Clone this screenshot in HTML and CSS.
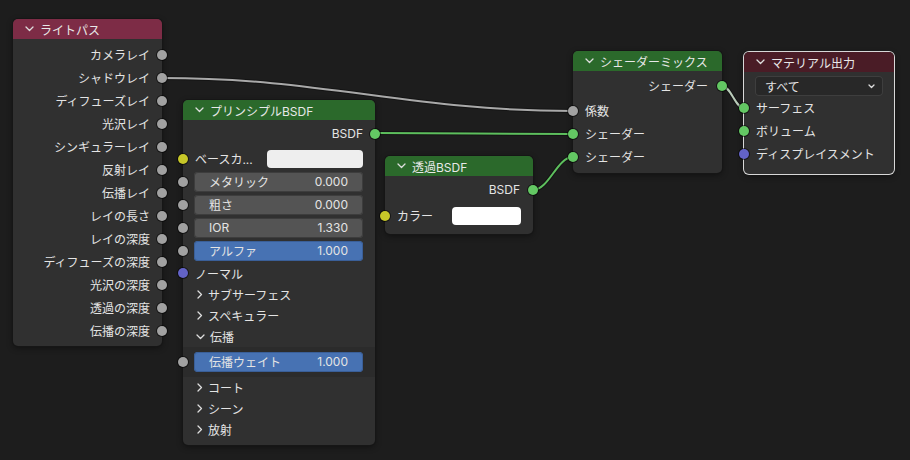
FILE: index.html
```html
<!DOCTYPE html>
<html lang="ja">
<head>
  <meta charset="UTF-8">
  <title>シェーダーエディター</title>
  <link rel="stylesheet" href="styles.css">
</head>
<body>
  <div class="canvas">
    <svg class="links" width="910" height="460" viewBox="0 0 910 460">
      <g class="link-shadow">
        <path d="M162 78 C326 78 409 111 573 111"/>
        <path d="M376 133 C455 133 494 134 573 134"/>
        <path d="M533 190 C549 190 557 157 573 157"/>
        <path d="M722 86 C731 86 735 108 744 108"/>
      </g>
      <path class="link gray" d="M162 78 C326 78 409 111 573 111"/>
      <path class="link green" d="M376 133 C455 133 494 134 573 134"/>
      <path class="link green" d="M533 190 C549 190 557 157 573 157"/>
      <path class="link pale" d="M722 86 C731 86 735 108 744 108"/>
    </svg>

    <!-- ライトパス -->
    <div class="node node-lightpath">
      <div class="node-header head-input">
        <svg class="chev" width="9" height="6" viewBox="0 0 9 6"><polyline points="1,1 4.5,4.5 8,1"/></svg>
        <span>ライトパス</span>
      </div>
      <div class="node-body">
        <div class="row out">カメラレイ<i class="socket gray"></i></div>
        <div class="row out">シャドウレイ<i class="socket gray"></i></div>
        <div class="row out">ディフューズレイ<i class="socket gray"></i></div>
        <div class="row out">光沢レイ<i class="socket gray"></i></div>
        <div class="row out">シンギュラーレイ<i class="socket gray"></i></div>
        <div class="row out">反射レイ<i class="socket gray"></i></div>
        <div class="row out">伝播レイ<i class="socket gray"></i></div>
        <div class="row out">レイの長さ<i class="socket gray"></i></div>
        <div class="row out">レイの深度<i class="socket gray"></i></div>
        <div class="row out">ディフューズの深度<i class="socket gray"></i></div>
        <div class="row out">光沢の深度<i class="socket gray"></i></div>
        <div class="row out">透過の深度<i class="socket gray"></i></div>
        <div class="row out">伝播の深度<i class="socket gray"></i></div>
      </div>
    </div>

    <!-- プリンシプルBSDF -->
    <div class="node node-principled">
      <div class="node-header head-shader">
        <svg class="chev" width="9" height="6" viewBox="0 0 9 6"><polyline points="1,1 4.5,4.5 8,1"/></svg>
        <span>プリンシプルBSDF</span>
      </div>
      <div class="node-body">
        <div class="row out">BSDF<i class="socket green"></i></div>
        <div class="row in gap-top">
          <i class="socket yellow"></i>
          <span class="label">ベースカ...</span>
          <span class="swatch swatch-base"></span>
        </div>
        <div class="row in fld"><i class="socket gray"></i><div class="field"><span class="fld-name">メタリック</span><span>0.000</span></div></div>
        <div class="row in fld"><i class="socket gray"></i><div class="field"><span>粗さ</span><span>0.000</span></div></div>
        <div class="row in fld"><i class="socket gray"></i><div class="field"><span>IOR</span><span>1.330</span></div></div>
        <div class="row in fld"><i class="socket gray"></i><div class="field active"><span>アルファ</span><span>1.000</span></div></div>
        <div class="row in short"><i class="socket purple"></i><span class="label">ノーマル</span></div>
        <div class="panel">
          <svg class="chev" width="6" height="9" viewBox="0 0 6 9"><polyline points="1,1 4.5,4.5 1,8"/></svg>
          <span>サブサーフェス</span>
        </div>
        <div class="panel">
          <svg class="chev" width="6" height="9" viewBox="0 0 6 9"><polyline points="1,1 4.5,4.5 1,8"/></svg>
          <span>スペキュラー</span>
        </div>
        <div class="panel">
          <svg class="chev" width="9" height="6" viewBox="0 0 9 6"><polyline points="1,1 4.5,4.5 8,1"/></svg>
          <span>伝播</span>
        </div>
        <div class="panel-body">
          <div class="row in fld"><i class="socket gray"></i><div class="field active"><span>伝播ウェイト</span><span>1.000</span></div></div>
        </div>
        <div class="panel">
          <svg class="chev" width="6" height="9" viewBox="0 0 6 9"><polyline points="1,1 4.5,4.5 1,8"/></svg>
          <span>コート</span>
        </div>
        <div class="panel">
          <svg class="chev" width="6" height="9" viewBox="0 0 6 9"><polyline points="1,1 4.5,4.5 1,8"/></svg>
          <span>シーン</span>
        </div>
        <div class="panel">
          <svg class="chev" width="6" height="9" viewBox="0 0 6 9"><polyline points="1,1 4.5,4.5 1,8"/></svg>
          <span>放射</span>
        </div>
      </div>
    </div>

    <!-- 透過BSDF -->
    <div class="node node-transparent">
      <div class="node-header head-shader">
        <svg class="chev" width="9" height="6" viewBox="0 0 9 6"><polyline points="1,1 4.5,4.5 8,1"/></svg>
        <span>透過BSDF</span>
      </div>
      <div class="node-body">
        <div class="row out">BSDF<i class="socket green"></i></div>
        <div class="row in gap-top3">
          <i class="socket yellow"></i>
          <span class="label">カラー</span>
          <span class="swatch swatch-small"></span>
        </div>
      </div>
    </div>

    <!-- シェーダーミックス -->
    <div class="node node-mix">
      <div class="node-header head-shader">
        <svg class="chev" width="9" height="6" viewBox="0 0 9 6"><polyline points="1,1 4.5,4.5 8,1"/></svg>
        <span>シェーダーミックス</span>
      </div>
      <div class="node-body">
        <div class="row out">シェーダー<i class="socket green"></i></div>
        <div class="row in gap-top"><i class="socket gray"></i><span class="label">係数</span></div>
        <div class="row in"><i class="socket green"></i><span class="label">シェーダー</span></div>
        <div class="row in"><i class="socket green"></i><span class="label">シェーダー</span></div>
      </div>
    </div>

    <!-- マテリアル出力 -->
    <div class="node node-output selected">
      <div class="node-header head-output">
        <svg class="chev" width="9" height="6" viewBox="0 0 9 6"><polyline points="1,1 4.5,4.5 8,1"/></svg>
        <span>マテリアル出力</span>
      </div>
      <div class="node-body">
        <div class="dropdown">
          <span>すべて</span>
          <svg class="chev small" width="7" height="5" viewBox="0 0 7 5"><polyline points="1,1 3.5,3.5 6,1"/></svg>
        </div>
        <div class="row in"><i class="socket green"></i><span class="label">サーフェス</span></div>
        <div class="row in"><i class="socket green"></i><span class="label">ボリューム</span></div>
        <div class="row in"><i class="socket purple"></i><span class="label">ディスプレイスメント</span></div>
      </div>
    </div>
  </div>
</body>
</html>
```

FILE: styles.css
```css
* {
  box-sizing: border-box;
}
body {
  margin: 0;
  background-color: #1d1d1d;
  font-family: Inter, "Noto Sans CJK JP", sans-serif;
  font-size: 12px;
  color: #e4e4e4;
}
.canvas {
  position: relative;
  width: 910px;
  height: 460px;
  overflow: hidden;
}

/* links */
.links {
  position: absolute;
  left: 0;
  top: 0;
}
.links path {
  fill: none;
}
.link-shadow path {
  stroke: #141414;
  stroke-width: 4;
}
.link {
  stroke-width: 2;
}
.link.gray { stroke: #a9a9a9; }
.link.green { stroke: #5dbf5d; }
.link.pale { stroke: #b9cbb9; }

/* nodes */
.node {
  position: absolute;
  background-color: #303030;
  border-radius: 5px;
  box-shadow: 0 0 0 1px #161616, 0 2px 6px rgba(0, 0, 0, 0.45);
}
.node.selected {
  box-shadow: 0 0 0 1px #d8d8d8, 0 2px 6px rgba(0, 0, 0, 0.45);
}
.node-lightpath { left: 13px; top: 19px; width: 149px; }
.node-principled { left: 183px; top: 100px; width: 192px; }
.node-transparent { left: 385px; top: 156px; width: 148px; }
.node-mix { left: 573px; top: 51px; width: 149px; }
.node-output { left: 744px; top: 52px; width: 150px; }

.node-header {
  height: 20px;
  display: flex;
  align-items: center;
  gap: 6px;
  padding-left: 12px;
  border-radius: 5px 5px 0 0;
  color: #e8e8e8;
}
.head-input { background-color: #7d2c46; }
.head-shader { background-color: #2b692b; }
.head-output { background-color: #4a1c26; }

.chev {
  flex: none;
}
.chev polyline {
  fill: none;
  stroke: #dedede;
  stroke-width: 1.3;
  stroke-linecap: round;
  stroke-linejoin: round;
}

.node-body {
  padding: 4px 0;
}
.node-principled .node-body { padding: 2px 0 5px; }
.node-transparent .node-body { padding: 2px 0 7px; }
.node-mix .node-body { padding: 3px 0 5px; }
.node-output .node-body { padding: 4px 0 9px; }

.row {
  position: relative;
  height: 23px;
  display: flex;
  align-items: center;
  padding: 0 12px;
  white-space: nowrap;
}
.row.out {
  justify-content: flex-end;
}
.node-mix .row.out { padding-right: 14px; }
.node-transparent .row.out { padding-right: 13px; }
.row.fld {
  padding: 0 12px 0 11px;
}
.row.short { height: 22px; }
.gap-top { margin-top: 2px; }
.gap-top3 { margin-top: 3px; }

.socket {
  position: absolute;
  top: 50%;
  width: 10px;
  height: 10px;
  margin-top: -5px;
  border-radius: 50%;
  box-shadow: 0 0 0 1px rgba(0, 0, 0, 0.55);
}
.row.out .socket { right: -5px; }
.row.in .socket { left: -5px; }
.socket.gray { background-color: #a1a1a1; }
.socket.green { background-color: #63c763; }
.socket.yellow { background-color: #c7c729; }
.socket.purple { background-color: #6363c7; }

.field {
  flex: 1;
  height: 20px;
  display: flex;
  align-items: center;
  justify-content: space-between;
  padding: 0 15px 0 15px;
  background-color: #545454;
  border-radius: 4px;
  box-shadow: inset 0 0 0 1px #3d3d3d;
}
.field.active {
  background-color: #4772b3;
  box-shadow: inset 0 0 0 1px #3a5f98;
}

.swatch {
  margin-left: auto;
  height: 18px;
  border-radius: 4px;
}
.swatch-base {
  width: 96px;
  background-color: #eeeeee;
}
.swatch-small {
  width: 69px;
  background-color: #ffffff;
}

.panel {
  height: 21px;
  display: flex;
  align-items: center;
  gap: 5px;
  padding-left: 14px;
}
.panel .chev[width="9"] {
  margin-left: -1px;
}
.panel-body {
  padding: 3px 0 4px;
  background-color: #2b2b2b;
}

.dropdown {
  height: 20px;
  margin: 0 11px;
  display: flex;
  align-items: center;
  justify-content: space-between;
  padding: 0 8px 0 10px;
  background-color: #282828;
  border-radius: 4px;
  box-shadow: inset 0 0 0 1px #3e3e3e;
}
```
